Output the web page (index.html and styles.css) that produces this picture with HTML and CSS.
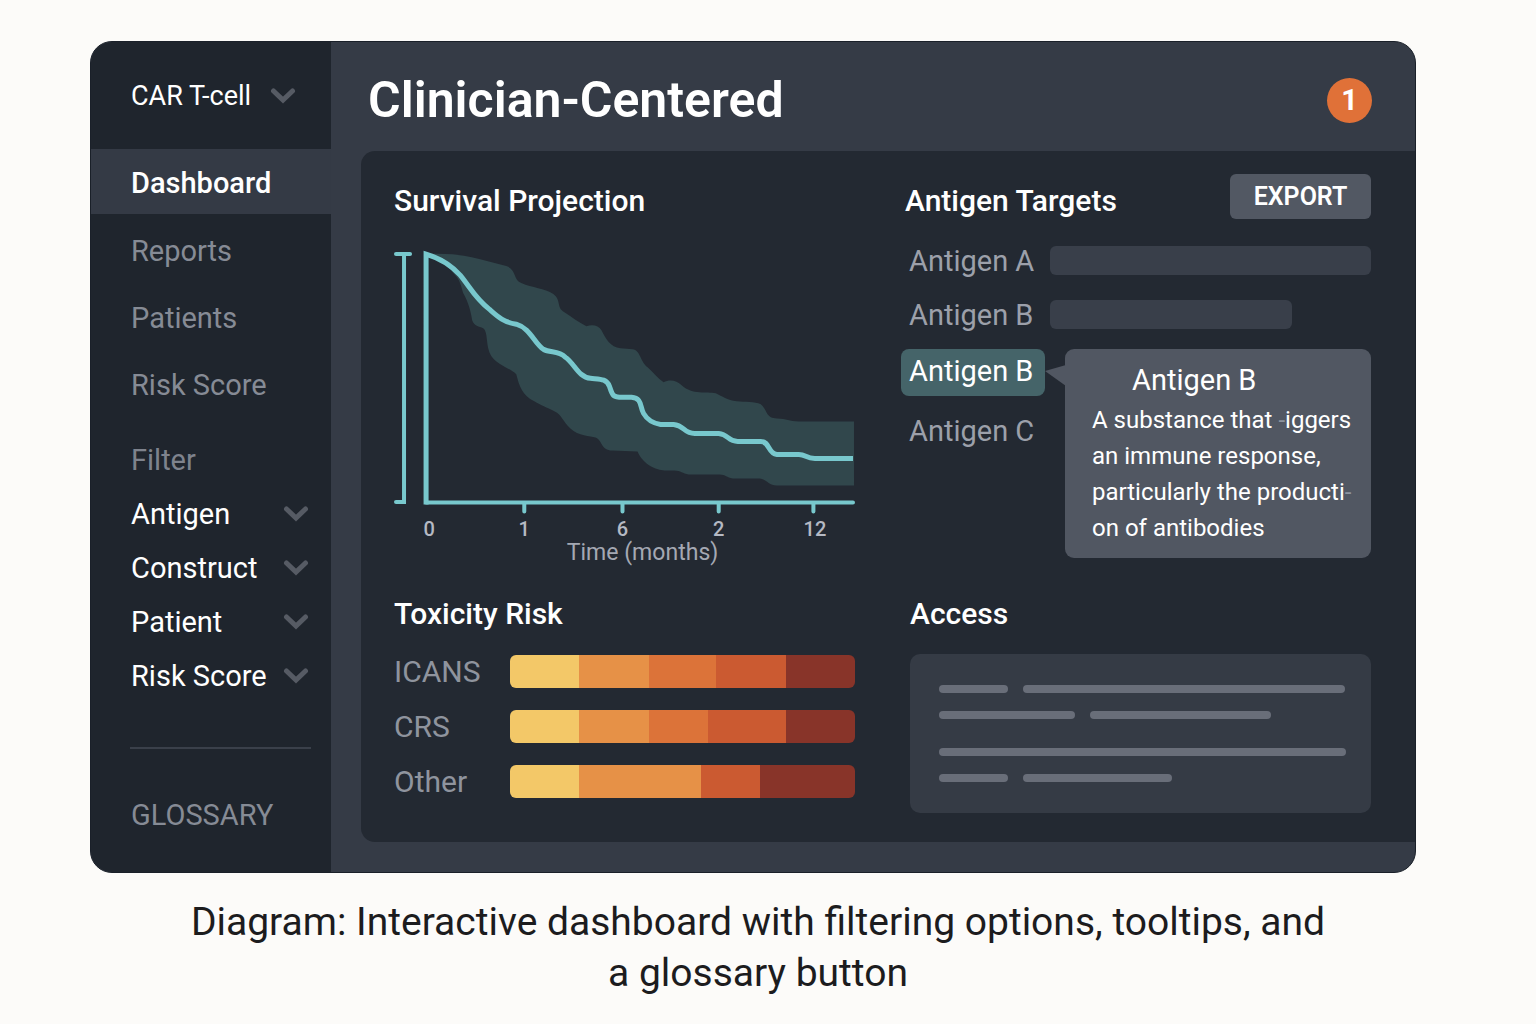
FILE: index.html
```html
<!DOCTYPE html>
<html lang="en">
<head>
<meta charset="utf-8">
<meta name="viewport" content="width=device-width, initial-scale=1">
<title>Clinician-Centered Dashboard</title>
<link rel="stylesheet" href="styles.css">
</head>
<body>
<figure class="figure">
  <div class="app">
    <aside class="sidebar">
      <div class="picker therapy">
        <select aria-label="Therapy"><option>CAR T-cell</option></select>
        <svg class="chevron" viewBox="0 0 26 18" aria-hidden="true"><path d="M3.500 4 13 13 22.500 4"/></svg>
      </div>
      <nav class="nav">
        <a class="nav-link active" href="#dashboard" aria-current="page">Dashboard</a>
        <a class="nav-link" href="#reports">Reports</a>
        <a class="nav-link" href="#patients">Patients</a>
        <a class="nav-link" href="#risk">Risk Score</a>
      </nav>
      <div class="filters">
        <h2 class="filters-title">Filter</h2>
        <div class="picker">
          <select aria-label="Filter by antigen"><option>Antigen</option></select>
          <svg class="chevron" viewBox="0 0 26 18" aria-hidden="true"><path d="M3.500 4 13 13 22.500 4"/></svg>
        </div>
        <div class="picker">
          <select aria-label="Filter by construct"><option>Construct</option></select>
          <svg class="chevron" viewBox="0 0 26 18" aria-hidden="true"><path d="M3.500 4 13 13 22.500 4"/></svg>
        </div>
        <div class="picker">
          <select aria-label="Filter by patient"><option>Patient</option></select>
          <svg class="chevron" viewBox="0 0 26 18" aria-hidden="true"><path d="M3.500 4 13 13 22.500 4"/></svg>
        </div>
        <div class="picker">
          <select aria-label="Filter by risk score"><option>Risk Score</option></select>
          <svg class="chevron" viewBox="0 0 26 18" aria-hidden="true"><path d="M3.500 4 13 13 22.500 4"/></svg>
        </div>
      </div>
      <hr class="divider">
      <button class="glossary" type="button">GLOSSARY</button>
    </aside>

    <main class="main">
      <header class="topbar">
        <h1 class="title">Clinician-Centered</h1>
        <button class="badge" type="button" aria-label="1 notification">1</button>
      </header>

      <div class="panel">
        <section class="survival">
          <div class="section-head"><h2>Survival Projection</h2></div>
          <svg class="chart" viewBox="0 0 460 326" role="img" aria-label="Survival projection over time in months">
            <path class="band" d="M32 14 C55 13 70 15 85 19 L112 26 C122 29 119 40 127 43 C138 48 150 48 159 54 C167 60 162 68 170 72 C178 77 184 82 192 86 C198 84 204 85 207 90 C211 98 216 107 226 108 L238 109 C246 110 246 122 253 127 C259 132 263 138 269 142 C275 139 282 140 287 145 C298 155 312 151 321 153 C328 156 332 160 342 161 C350 162 360 161 366 164 C373 170 371 178 382 178 C392 178 394 181 404 181 L459 181 L459 245 L382 245 C374 245 372 239 365 238 L338 238 C332 237 331 234 325 234 L294 234 C288 233 286 230 280 230 L270 230 C256 229 246 219 243 211 L218 210 C206 210 208 199 201 197 C196 195 184 196 176 188 C168 181 168 175 160 171 C152 167 147 165 140 161 C128 155 125 146 122 134 C114 126 97 124 94 108 C92 99 93 91 89 88 C85 86 80 86 78 80 C76 68 73 60 69 53 C67 46 66 40 60 34 C54 26 44 18 32 14 Z"/>
            <g class="axes">
              <path d="M2 14H16M10 14V261.500H2"/>
              <path d="M32 262H458M130 264V271M228 264V271M324 264V271M418.500 264V271"/>
            </g>
            <path class="curve" d="M32 264 V14 C45 18 57 25 66 35 C76 47 80 57 95 69 C103 76 109 82 122 84 C136 88 140 103 149 109 C156 113 164 110 171 117 C180 123 184 137 196 138 C205 139 212 138 215 146 C218 155 218 157 228 157 L237 157 C248 158 245 166 249 173 C253 180 259 183 266 184 L279 184 C290 185 289 193 300 193 L324 193 C334 194 333 201 343 201 L366 201 C375 201 373 213 382 214 L404 214 C411 214 411 218 420 218 L458 218"/>
            <g class="ticks">
              <text x="35" y="295">0</text>
              <text x="130" y="295">1</text>
              <text x="228" y="295">6</text>
              <text x="324" y="295">2</text>
              <text x="420" y="295">12</text>
            </g>
            <text class="axis-title" x="248" y="319">Time (months)</text>
          </svg>
        </section>

        <section class="antigens">
          <div class="section-head">
            <h2>Antigen Targets</h2>
            <button class="export" type="button">EXPORT</button>
          </div>
          <ul class="antigen-list">
            <li><span class="antigen">Antigen A</span><span class="track"><span class="bar" style="width:100%"></span></span></li>
            <li><span class="antigen">Antigen B</span><span class="track"><span class="bar" style="width:75.4%"></span></span></li>
            <li class="selected">
              <button class="chip" type="button" aria-describedby="antigen-tip">Antigen B</button>
              <div class="tooltip" role="tooltip" id="antigen-tip">
                <svg class="pointer" viewBox="0 0 21 22" aria-hidden="true"><path d="M0 6 21 0V21Z"/></svg>
                <h3>Antigen B</h3>
                <p>A substance that <span class="faint">-</span>iggers<br>an immune response,<br>particularly the producti<span class="faint">-</span><br>on of antibodies</p>
              </div>
            </li>
            <li><span class="antigen">Antigen C</span></li>
          </ul>
        </section>

        <section class="toxicity">
          <div class="section-head"><h2>Toxicity Risk</h2></div>
          <dl class="risks">
            <dt>ICANS</dt>
            <dd><i class="r1" style="flex-grow:69"></i><i class="r2" style="flex-grow:70"></i><i class="r3" style="flex-grow:66"></i><i class="r4" style="flex-grow:70"></i><i class="r5" style="flex-grow:69"></i></dd>
            <dt>CRS</dt>
            <dd><i class="r1" style="flex-grow:69"></i><i class="r2" style="flex-grow:70"></i><i class="r3" style="flex-grow:58"></i><i class="r4" style="flex-grow:78"></i><i class="r5" style="flex-grow:69"></i></dd>
            <dt>Other</dt>
            <dd><i class="r1" style="flex-grow:69"></i><i class="r2" style="flex-grow:121"></i><i class="r4" style="flex-grow:59"></i><i class="r5" style="flex-grow:95"></i></dd>
          </dl>
        </section>

        <section class="access">
          <div class="section-head"><h2>Access</h2></div>
          <div class="access-card">
            <div class="line"><i style="width:17%"></i><i style="width:79%"></i></div>
            <div class="line"><i style="width:33.500%"></i><i style="width:44.500%"></i></div>
            <div class="line spaced"><i style="width:100%"></i></div>
            <div class="line"><i style="width:17%"></i><i style="width:36.500%"></i></div>
          </div>
        </section>
      </div>
    </main>
  </div>
  <figcaption class="caption">Diagram: Interactive dashboard with filtering options, tooltips, and a glossary button</figcaption>
</figure>
</body>
</html>
```
FILE: styles.css
```css
* { box-sizing: border-box; }

body {
  margin: 0;
  background: #fcfbf9;
  font-family: Roboto, "Liberation Sans", sans-serif;
  font-size: 29px;
  line-height: 32px;
  color: #fff;
}

h1, h2, h3, p, ul, dl, dd { margin: 0; padding: 0; }
ul { list-style: none; }
h2 { font-size: 30px; font-weight: 500; }
h3 { font-size: 29px; font-weight: 400; }

button, select {
  margin: 0;
  padding: 0;
  border: 0;
  background: none;
  font: inherit;
  color: inherit;
  cursor: pointer;
}

.figure { margin: 0; padding: 41px 120px 0 90px; }

.app {
  display: flex;
  border: 1px solid #1a2029;
  border-radius: 22px;
  overflow: hidden;
  background: #353b46;
}

/* Sidebar */
.sidebar {
  flex: 0 0 240px;
  display: flex;
  flex-direction: column;
  background: #1f252d;
}

.picker { display: grid; align-items: center; height: 54px; }
.picker select, .picker .chevron { grid-area: 1 / 1; }
.picker select { appearance: none; width: 100%; height: 100%; }
.picker option { color: #1f252d; }
.therapy { height: 107px; padding: 0 35px 0 40px; font-size: 27px; }

.chevron {
  justify-self: end;
  width: 26px;
  height: 18px;
  fill: none;
  stroke: #565b64;
  stroke-width: 5;
  stroke-linecap: round;
  pointer-events: none;
}

.nav { display: flex; flex-direction: column; }
.nav-link {
  padding: 17px 40px 18px;
  color: #868b95;
  text-decoration: none;
}
.nav-link.active {
  margin-bottom: 4px;
  padding: 18px 40px 15px;
  background: #343a45;
  color: #fff;
  font-weight: 500;
}

.filters { padding: 14px 22px 0 40px; }
.filters-title { color: #7e838d; font-size: 29px; font-weight: 400; line-height: 54px; }

.divider {
  width: 181px;
  height: 2px;
  margin: 44px 0 0 39px;
  border: 0;
  background: #3a404a;
}
.glossary { margin: 50px 0 0 40px; text-align: left; color: #868b95; }

/* Main area */
.main { flex: 1; min-width: 0; padding: 0 0 30px 30px; }
.topbar {
  display: flex;
  align-items: center;
  justify-content: space-between;
  height: 109px;
  padding: 7px 43px 0 7px;
}
.title { font-size: 50px; line-height: 56px; font-weight: 600; }
.badge {
  width: 45px;
  height: 45px;
  border-radius: 50%;
  background: #e07138;
  font-weight: 700;
}

.panel {
  display: grid;
  grid-template-columns: 1fr 1fr;
  gap: 20px 55px;
  padding: 23px 44px 29px 33px;
  border-radius: 14px 0 0 14px;
  background: #232932;
}
.section-head {
  display: flex;
  align-items: flex-start;
  justify-content: space-between;
}
.section-head h2 { padding-top: 11px; }

/* Survival chart */
.chart { display: block; width: 100%; margin-top: 23px; overflow: visible; }
.band { fill: #31474c; }
.axes path { fill: none; stroke: #78c8cd; stroke-width: 4; stroke-linecap: round; }
.curve { fill: none; stroke: #78c8cd; stroke-width: 5; }
.ticks text { fill: #b5b9c3; font-size: 20px; font-weight: 500; text-anchor: middle; }
.axis-title { fill: #a4a8b3; font-size: 23px; text-anchor: middle; }

/* Antigen targets */
.antigens { margin-left: -9px; }
.antigens .section-head { padding-left: 4px; }
.export {
  width: 141px;
  height: 45px;
  border-radius: 6px;
  background: #525863;
  font-size: 25px;
  font-weight: 600;
}
.antigen-list { display: grid; gap: 15px; margin-top: 22px; }
.antigen-list li { display: flex; align-items: center; height: 39px; }
.antigen { flex: 0 0 149px; padding-left: 8px; color: #9ca0aa; }
.track { flex: 1; }
.bar { display: block; height: 29px; border-radius: 6px; background: #393f4a; }
.antigen-list .selected { position: relative; height: 47px; }
.chip {
  width: 144px;
  height: 47px;
  padding: 0 0 4px 8px;
  border-radius: 8px;
  background: #456469;
  text-align: left;
}
.tooltip {
  position: absolute;
  top: 0;
  left: 164px;
  right: 0;
  height: 209px;
  padding: 15px 0 0 27px;
  border-radius: 9px;
  background: #515762;
}
.tooltip h3 { padding-left: 40px; }
.tooltip p { margin-top: 6px; font-size: 24px; line-height: 36px; white-space: nowrap; }
.faint { color: #8d949f; }
.pointer { position: absolute; top: 16px; left: -20px; width: 21px; height: 22px; fill: #515762; }

/* Toxicity */
.risks {
  display: grid;
  grid-template-columns: 116px 1fr;
  gap: 22px 0;
  margin-top: 25px;
}
.risks dt { font-size: 30px; line-height: 33px; color: #8f949e; }
.risks dd { display: flex; height: 33px; border-radius: 6px; overflow: hidden; }
.risks i { flex-basis: 0; }
.r1 { background: #f3c868; }
.r2 { background: #e69147; }
.r3 { background: #dc7339; }
.r4 { background: #cb5a31; }
.r5 { background: #883429; }

/* Access */
.access-card {
  display: grid;
  align-content: start;
  gap: 18px;
  height: 159px;
  margin-top: 24px;
  padding: 31px 25px 0 29px;
  border-radius: 10px;
  background: #353b45;
}
.line { display: flex; gap: 15px; }
.line i { height: 8px; border-radius: 4px; background: #696e79; }
.line.spaced { margin-top: 11px; }

.caption {
  padding: 24px 80px 24px 90px;
  color: #1c1c1e;
  font-size: 39px;
  line-height: 51px;
  text-align: center;
}
```
